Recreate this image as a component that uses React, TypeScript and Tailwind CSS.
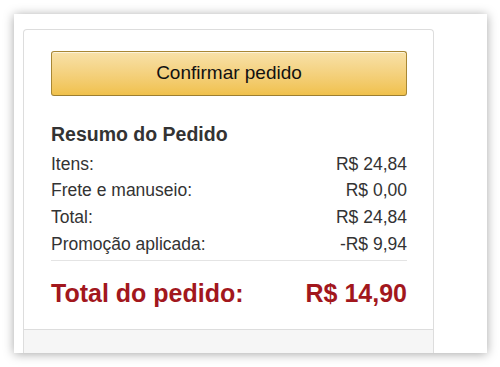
import React from 'react';

const rows = [
  { label: 'Itens:', value: 'R$ 24,84' },
  { label: 'Frete e manuseio:', value: 'R$ 0,00' },
  { label: 'Total:', value: 'R$ 24,84' },
  { label: 'Promoção aplicada:', value: '-R$ 9,94' },
];

const App: React.FC = () => {
  return (
    <div className="w-[500px] h-[367px] bg-white p-[14px] pr-[13px] font-['Liberation_Sans',Arial,sans-serif]">
      <div className="h-full bg-white shadow-[0_1px_10px_rgba(0,0,0,0.35)] pl-[9px] pt-[15px] flex">
        <div className="w-[411px] h-full border border-b-0 border-[#dddddd] rounded-t-[4px] flex flex-col">
          <div className="flex-1 pl-[27px] pr-[26px] pt-[21px]">
            <button className="w-full h-[45px] rounded-[3px] border border-[#a88734] border-b-[#9c7e31] bg-gradient-to-b from-[#f8e1a8] to-[#f0c14b] text-[19px] text-[#111] shadow-[inset_0_1px_0_rgba(255,255,255,0.6)]">
              Confirmar pedido
            </button>
            <h3 className="mt-[26px] text-[19.5px] leading-[24px] font-bold text-[#333]">Resumo do Pedido</h3>
            <div className="mt-[4.6px] text-[17.5px] leading-[26.7px] text-[#333]">
              {rows.map((r) => (
                <div key={r.label} className="flex justify-between">
                  <span>{r.label}</span>
                  <span>{r.value}</span>
                </div>
              ))}
            </div>
            <div className="mt-[3px] border-t border-[#e4e4e4]" />
            <div className="mt-[15.7px] flex justify-between text-[25px] leading-[32px] font-bold text-[#a2171d]">
              <span>Total do pedido:</span>
              <span>R$ 14,90</span>
            </div>
          </div>
          <div className="h-[24px] border-t border-[#dddddd] bg-[#f6f6f6]" />
        </div>
      </div>
    </div>
  );
};

export default App;
